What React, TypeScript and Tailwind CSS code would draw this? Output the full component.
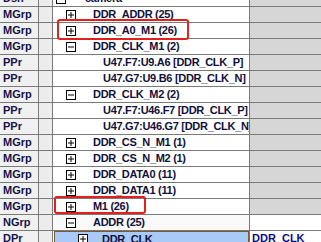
type Row = {
  kind: string;
  level: number;
  box?: '+' | '-';
  text: string;
  sel?: boolean;
  right?: string;
  rightWhite?: boolean;
  dim?: boolean;
};

const rows: Row[] = [
  { kind: 'Dsn', level: 0, box: '-', text: 'camera' },
  { kind: 'MGrp', level: 1, box: '+', text: 'DDR_ADDR (25)' },
  { kind: 'MGrp', level: 1, box: '+', text: 'DDR_A0_M1 (26)' },
  { kind: 'MGrp', level: 1, box: '-', text: 'DDR_CLK_M1 (2)' },
  { kind: 'PPr', level: 2, text: 'U47.F7:U9.A6 [DDR_CLK_P]' },
  { kind: 'PPr', level: 2, text: 'U47.G7:U9.B6 [DDR_CLK_N]' },
  { kind: 'MGrp', level: 1, box: '-', text: 'DDR_CLK_M2 (2)' },
  { kind: 'PPr', level: 2, text: 'U47.F7:U46.F7 [DDR_CLK_P]' },
  { kind: 'PPr', level: 2, text: 'U47.G7:U46.G7 [DDR_CLK_N]' },
  { kind: 'MGrp', level: 1, box: '+', text: 'DDR_CS_N_M1 (1)' },
  { kind: 'MGrp', level: 1, box: '+', text: 'DDR_CS_N_M2 (1)' },
  { kind: 'MGrp', level: 1, box: '+', text: 'DDR_DATA0 (11)' },
  { kind: 'MGrp', level: 1, box: '+', text: 'DDR_DATA1 (11)' },
  { kind: 'MGrp', level: 1, box: '+', text: 'M1 (26)' },
  { kind: 'NGrp', level: 1, box: '-', text: 'ADDR (25)', rightWhite: true, dim: true },
  { kind: 'DPr', level: 2, box: '+', text: 'DDR_CLK', sel: true, right: 'DDR_CLK', rightWhite: true },
];

const Toggle = ({ sign }: { sign: '+' | '-' }) => (
  <svg width="10" height="10" viewBox="0 0 10 10" className="shrink-0">
    <rect x="0.5" y="0.5" width="9" height="9" fill="white" stroke="#000" />
    <path d="M2 5h6" stroke="#000" />
    {sign === '+' && <path d="M5 2v6" stroke="#000" />}
  </svg>
);

// left padding in the tree column, per level
const indent = ['pl-[2px]', 'pl-[12px]', 'pl-[23px]'];
const gap = ['ml-[19px]', 'ml-[17px]', 'ml-[14px]'];

export default function App() {
  return (
    <div className="relative h-[242px] w-[321px] overflow-hidden bg-white font-['Liberation_Sans',Arial,sans-serif] text-[11px] font-bold">
      <div className="mt-[-9px]">
        {rows.map((r, i) => (
          <div key={i} className="flex h-[16px] border-b border-[#7a7a7a]">
            <div className="flex w-[39px] shrink-0 items-center border-r border-[#7a7a7a] bg-[#f0f0f0] pl-[3px] text-[#14144a]">
              {r.kind}
            </div>
            <div className="w-[14px] shrink-0 border-r border-[#7a7a7a] bg-[#ececec]" />
            <div
              className={`flex w-[197px] shrink-0 items-center overflow-hidden whitespace-nowrap border-r border-[#7a7a7a] pl-[1px] tracking-[-0.3px] text-[#10103c] ${r.dim ? 'bg-[#f9f9f9]' : 'bg-white'}`}
            >
              <div
                className={`flex h-full flex-1 items-center ${indent[r.level]} ${r.sel ? 'border-x border-t border-[#7a5a2e] bg-[#a9c9f7]' : ''}`}
              >
                {r.box ? (
                  <>
                    <Toggle sign={r.box} />
                    <span className={gap[r.level]}>{r.text}</span>
                  </>
                ) : (
                  <span className="ml-[26px]">{r.text}</span>
                )}
              </div>
            </div>
            <div
              className={`flex flex-1 items-center pl-[2px] text-[#0a0a8a] ${r.rightWhite ? 'bg-white' : 'bg-[#d6d6d6]'}`}
            >
              {r.right}
            </div>
          </div>
        ))}
      </div>

      {/* highlight boxes */}
      <div className="absolute left-[57px] top-[19px] h-[21px] w-[132px] rounded-[3px] border-2 border-[#e3211c]" />
      <div className="absolute left-[54px] top-[196px] h-[18px] w-[92px] rounded-[3px] border-2 border-[#e3211c]" />
    </div>
  );
}
